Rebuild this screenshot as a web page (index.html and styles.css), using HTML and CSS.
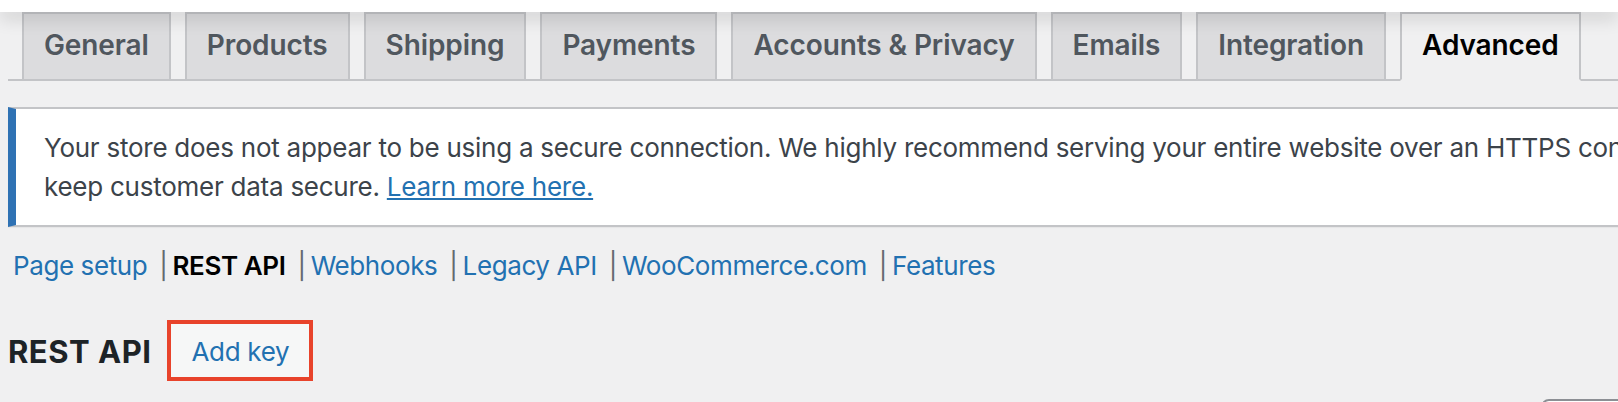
FILE: index.html
```html
<!DOCTYPE html>
<html>
<head>
  <title>WooCommerce Settings - Advanced</title>
  <link rel="stylesheet" href="styles.css">
</head>
<body>

<div class="topbar"></div>

<div class="wrap">
  <nav class="nav-tab-wrapper">
    <a href="#" class="nav-tab">General</a>
    <a href="#" class="nav-tab">Products</a>
    <a href="#" class="nav-tab">Shipping</a>
    <a href="#" class="nav-tab">Payments</a>
    <a href="#" class="nav-tab">Accounts &amp; Privacy</a>
    <a href="#" class="nav-tab">Emails</a>
    <a href="#" class="nav-tab">Integration</a>
    <a href="#" class="nav-tab nav-tab-active">Advanced</a>
  </nav>

  <div class="notice">
    <p>Your store does not appear to be using a secure connection. We highly recommend serving your entire website over an HTTPS connection to help<br>
    keep customer data secure. <a href="#">Learn more here.</a></p>
  </div>

  <ul class="subsubsub">
    <li><a href="#">Page setup</a> |</li>
    <li><a href="#" class="current">REST API</a> |</li>
    <li><a href="#">Webhooks</a> |</li>
    <li><a href="#">Legacy API</a> |</li>
    <li><a href="#">WooCommerce.com</a> |</li>
    <li><a href="#">Features</a></li>
  </ul>

  <div class="title-row">
    <h2>REST API</h2>
    <a href="#" class="page-title-action">Add key</a>
  </div>

  <div class="tablenav">
    <div class="search-box"></div>
  </div>
</div>

</body>
</html>
```

FILE: styles.css
```css
/* Base page */
html, body {
  overflow: hidden;
}
body {
  margin: 0;
  background-color: #f0f0f1;
  color: #3c434a;
  font-family: Inter, "Noto Sans", sans-serif;
}
a {
  color: #2271b1;
}

/* White bar at the very top, its shadow falls over the tabs */
.topbar {
  position: relative;
  z-index: 2;
  height: 12px;
  background-color: #fff;
  box-shadow: 0 6px 18px rgba(0, 0, 0, 0.16);
}

.wrap {
  width: 1900px;
  margin-left: 8px;
}

/* Tabs */
.nav-tab-wrapper {
  display: flex;
  align-items: flex-end;
  border-bottom: 2px solid #c3c4c7;
}
.nav-tab {
  margin-left: 14px;
  margin-bottom: -2px;
  padding: 7px 20px 10px;
  border: 2px solid #c3c4c7;
  background-color: #dcdcde;
  color: #50575e;
  font-size: 28px;
  font-weight: 600;
  line-height: 48px;
  letter-spacing: -0.1px;
  text-decoration: none;
  white-space: nowrap;
}
.nav-tab-active {
  background-color: #f0f0f1;
  border-bottom-color: #f0f0f1;
  color: #000;
}

/* Notice */
.notice {
  margin-top: 26px;
  background-color: #fff;
  border: 2px solid #c3c4c7;
  border-left: 8px solid #2f72b4;
  box-shadow: 0 1px 1px rgba(0, 0, 0, 0.04);
}
.notice p {
  margin: 0;
  padding: 19px 24px 19px 28px;
  font-size: 26px;
  line-height: 39px;
  letter-spacing: -0.25px;
  white-space: nowrap;
}

/* Sub navigation */
.subsubsub {
  display: flex;
  margin: 13px 0 0;
  padding: 0;
  list-style: none;
  font-size: 26px;
  line-height: 52px;
  letter-spacing: -0.4px;
  color: #646970;
}
.subsubsub li {
  white-space: pre;
}
.subsubsub a {
  padding: 0 5px;
  text-decoration: none;
}
.subsubsub a.current {
  color: #000;
  font-weight: 600;
}

/* Title with action button */
.title-row {
  display: flex;
  align-items: flex-start;
  margin-top: 28px;
}
.title-row h2 {
  margin: 12px 0 0;
  color: #1d2327;
  font-size: 31px;
  font-weight: 700;
  line-height: 40px;
  letter-spacing: 0.5px;
}
.page-title-action {
  margin-left: 16px;
  padding: 3px 20px 0;
  border: 4px solid #e8432b;
  background-color: #f6f7f7;
  font-size: 26px;
  line-height: 50px;
  letter-spacing: -0.3px;
  text-decoration: none;
}

/* Search box peeking in at the bottom */
.tablenav {
  display: flex;
  justify-content: flex-end;
  margin-top: 18px;
}
.search-box {
  width: 363px;
  height: 60px;
  border: 2px solid #8c8f94;
  border-radius: 8px;
  background-color: #fff;
}
```
